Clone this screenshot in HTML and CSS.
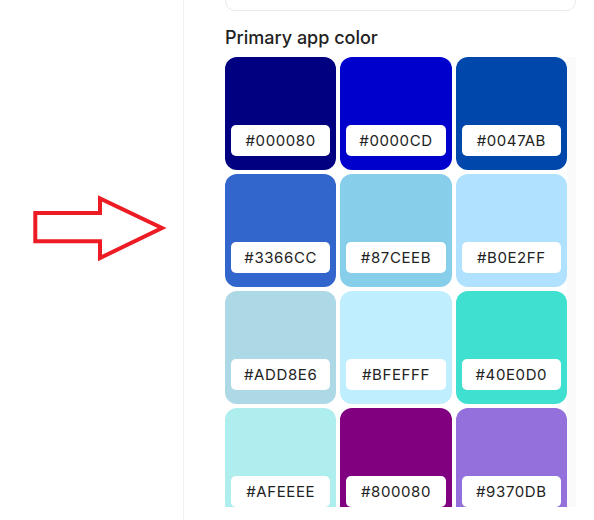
FILE: index.html
```html
<!DOCTYPE html>
<html lang="en">
<head>
<meta charset="utf-8">
<title>Primary app color</title>
<link rel="stylesheet" href="styles.css">
</head>
<body>
<div class="page">
  <aside class="annotation">
    <svg class="arrow" width="183" height="520" viewBox="0 0 183 520" aria-hidden="true">
      <path d="M35.3 213 H100 V198.5 L162 228 L100 258 V241.3 H35.3 Z" fill="none" stroke="#ed1c24" stroke-width="4" stroke-linejoin="miter"/>
    </svg>
  </aside>
  <main class="settings">
    <div class="card"></div>
    <h2 class="section-title">Primary app color</h2>
    <div class="palette">
      <div class="swatch-grid">
        <div class="swatch" style="background:#000080"><span class="hex">#000080</span></div>
        <div class="swatch" style="background:#0000CD"><span class="hex">#0000CD</span></div>
        <div class="swatch" style="background:#0047AB"><span class="hex">#0047AB</span></div>
        <div class="swatch" style="background:#3366CC"><span class="hex">#3366CC</span></div>
        <div class="swatch" style="background:#87CEEB"><span class="hex">#87CEEB</span></div>
        <div class="swatch" style="background:#B0E2FF"><span class="hex">#B0E2FF</span></div>
        <div class="swatch" style="background:#ADD8E6"><span class="hex">#ADD8E6</span></div>
        <div class="swatch" style="background:#BFEFFF"><span class="hex">#BFEFFF</span></div>
        <div class="swatch" style="background:#40E0D0"><span class="hex">#40E0D0</span></div>
        <div class="swatch" style="background:#AFEEEE"><span class="hex">#AFEEEE</span></div>
        <div class="swatch" style="background:#800080"><span class="hex">#800080</span></div>
        <div class="swatch" style="background:#9370DB"><span class="hex">#9370DB</span></div>
      </div>
      <div class="track"></div>
    </div>
  </main>
</div>
</body>
</html>
```

FILE: styles.css
```css
html, body {
  margin: 0;
  padding: 0;
  background: #ffffff;
  overflow: hidden;
}

body {
  font-family: Inter, "Noto Sans", "Liberation Sans", sans-serif;
  color: #222222;
}

.page {
  display: flex;
  width: 594px;
  height: 520px;
}

.annotation {
  width: 183px;
  flex: none;
}

.arrow {
  display: block;
}

.settings {
  flex: 1;
  border-left: 1px solid #f0f0f0;
  padding: 0 18px 0 41px;
  display: flex;
  flex-direction: column;
}

.card {
  height: 59px;
  margin-top: -50px;
  border: 1px solid #e9e9e9;
  border-radius: 10px;
  flex: none;
}

.section-title {
  margin: 17px 0 9px;
  font-size: 18px;
  line-height: 20px;
  font-weight: 500;
  color: #222222;
}

.palette {
  display: flex;
  height: 450px;
  overflow: hidden;
}

.swatch-grid {
  flex: 1;
  display: grid;
  grid-template-columns: repeat(3, 1fr);
  grid-auto-rows: 113px;
  gap: 4px;
  align-content: start;
}

.swatch {
  border-radius: 12px;
  display: flex;
  flex-direction: column;
  justify-content: flex-end;
  padding: 0 6px 14px;
}

.hex {
  display: flex;
  align-items: center;
  justify-content: center;
  height: 31px;
  background: #ffffff;
  border-radius: 5px;
  font-size: 15px;
  letter-spacing: 0.6px;
  color: #222222;
}

.track {
  width: 9px;
  flex: none;
  background: #fafafa;
}
```
